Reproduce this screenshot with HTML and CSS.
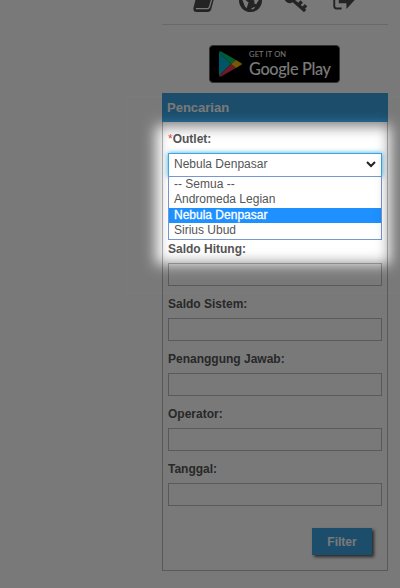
FILE: index.html
```
<!DOCTYPE html>
<html lang="id">
<head>
	<meta charset="UTF-8">
	<meta name="viewport" content="width=device-width, initial-scale=1.0">
	<title>Pencarian</title>
	<link rel="stylesheet" href="styles.css">
</head>
<body>

<div class="sidebar">
	<div class="icons">
		<svg class="icon" viewBox="0 0 24 24">
			<path d="M7 0h16q1.500 0 1 2l-5 19q-.7 3-3 3H3.500Q0 24 .5 19.500L5 2q.7-2 2-2z"/>
			<path class="cut" d="M3 20.500h12q1.700 0 2.300-2L21.500 4"/>
		</svg>
		<svg class="icon" viewBox="0 0 24 24">
			<circle cx="12" cy="12" r="12"/>
			<path class="land" d="M3 10l3 1 4 3-1 3-1 3-2-2-1-3zM14 5l5 1 2 5-2 3-1 2-2-1v-3l-3-1zM12 21l3-2 2 0-2 2z"/>
		</svg>
		<svg class="icon" viewBox="0 0 24 24">
			<path class="key" d="M8 11.500L21 23M14 16.500l3.500-3.500M18.500 20.500L22 17"/>
			<circle class="key" cx="5" cy="9" r="4"/>
		</svg>
		<svg class="icon icon-out" viewBox="0 0 24 24">
			<path class="exit" d="M9 22.500H4q-2.700 0-2.700-2.700V3H7"/>
			<path d="M6 5h8V-2l11 13-11 12v-6H6z"/>
		</svg>
	</div>

	<div class="store">
		<div class="badge">
			<svg class="play" viewBox="0 0 23 26">
				<path fill="#00b4d4" d="M0 1v24l12-12z"/>
				<path fill="#00c46a" d="M0 1q1-1.500 3 0l14 8-5 4z"/>
				<path fill="#e8354f" d="M0 25q1 1.500 3 0l14-8-5-4z"/>
				<path fill="#f5bd00" d="M17 9l5 3q1.500 1 0 2l-5 3-5-4z"/>
			</svg>
			<div class="badge-text">
				<div class="get">GET IT ON</div>
				<div class="google">Google Play</div>
			</div>
		</div>
	</div>

	<div class="panel">
		<div class="panel-head">Pencarian</div>
		<form class="panel-body">
			<div class="label label-outlet"><span class="req">*</span>Outlet:</div>
			<div class="select">
				<span>Nebula Denpasar</span>
				<svg class="arrow" viewBox="0 0 10 7"><path d="M1 1l4 4 4-4"/></svg>
			</div>
			<ul class="options">
				<li>-- Semua --</li>
				<li>Andromeda Legian</li>
				<li class="selected">Nebula Denpasar</li>
				<li class="last">Sirius Ubud</li>
			</ul>

			<div class="label label-first">Saldo Hitung:</div>
			<input class="field" type="text">
			<div class="label">Saldo Sistem:</div>
			<input class="field" type="text">
			<div class="label">Penanggung Jawab:</div>
			<input class="field" type="text">
			<div class="label">Operator:</div>
			<input class="field" type="text">
			<div class="label">Tanggal:</div>
			<input class="field" type="text">

			<button class="filter" type="button">Filter</button>
		</form>
	</div>
</div>

<div class="overlay">
	<div class="spotlight"></div>
</div>

</body>
</html>
```
FILE: styles.css
```
*{
	margin: 0;
	padding: 0;
	box-sizing: border-box;
}

body{
	position: relative;
	height: 588px;
	overflow: hidden;
	background: #fff;
	color: #555;
	font-family: "Liberation Sans", Arial, sans-serif;
	font-size: 12px;
}

.sidebar{
	width: 226px;
	margin-left: 162px;
}

/* top menu, scrolled partly out of view */
.icons{
	display: flex;
	align-items: flex-end;
	gap: 23px;
	height: 25px;
	padding: 0 0 12px 31px;
	border-bottom: 1px solid #ddd;
}

.icon{
	flex: none;
	width: 23px;
	height: 23px;
	fill: #4d4d4d;
	overflow: visible;
}

.icon-out{
	margin: 0 0 2px 2px;
}

.cut{
	fill: none;
	stroke: #fff;
	stroke-width: 1.3;
}

.land{
	fill: #fff;
}

.key,
.exit{
	fill: none;
	stroke: #4d4d4d;
	stroke-width: 3.5;
}

.exit{
	stroke-width: 2;
}

.store{
	height: 68px;
	padding: 20px 0 0 47px;
}

.badge{
	display: flex;
	width: 131px;
	height: 38px;
	padding: 5px 0 0 9px;
	border: 1px solid #666;
	border-radius: 4px;
	background: #000;
	color: #fff;
}

.play{
	width: 23px;
	height: 26px;
}

.badge-text{
	margin-left: 7px;
	white-space: nowrap;
}

.get{
	font: 7.5px/8px Lato, sans-serif;
	letter-spacing: .15px;
}

.google{
	font: 500 16.3px/19px Lato, sans-serif;
	letter-spacing: -.35px;
}

.panel{
	height: 478px;
	border: 1px solid #bbb;
	border-top: 0;
}

.panel-head{
	height: 29px;
	margin: 0 -1px;
	padding-left: 5px;
	background: #3ba2e1;
	color: #fff;
	font-size: 13px;
	font-weight: bold;
	line-height: 29px;
}

.panel-body{
	padding: 1px 5px 0;
}

.label{
	height: 32px;
	padding-top: 11px;
	font-weight: bold;
	line-height: 15px;
}

.label-outlet{
	padding-top: 9px;
}

.label-first{
	height: 23px;
	padding-top: 2px;
}

.req{
	color: #e04b5a;
	font-weight: normal;
}

.select{
	display: flex;
	align-items: center;
	justify-content: space-between;
	height: 24px;
	margin-top: -2px;
	padding: 0 5px 2px;
	border: 1px solid #3da9e0;
	box-shadow: 0 0 5px #3da9e0;
}

.arrow{
	width: 10px;
	height: 7px;
	fill: none;
	stroke: #222;
	stroke-width: 2;
}

.options{
	position: relative;
	height: 64px;
	margin-top: -1px;
	padding-top: 1px;
	border: 1px solid #7897cf;
	background: #fff;
	list-style: none;
}

.options li{
	height: 15px;
	padding-left: 5px;
	line-height: 13px;
}

.options .selected,
.options .last{
	line-height: 14px;
}

.options .selected{
	background: #1e90ff;
	color: #fff;
	-webkit-text-stroke: .3px #fff;
}

.field{
	display: block;
	width: 100%;
	height: 23px;
	border: 1px solid #bbb;
	background: none;
}

.filter{
	display: block;
	width: 60px;
	height: 27px;
	margin: 22px 10px 0 auto;
	border: 0;
	background: #3ba2e1;
	box-shadow: 2px 2px 3px #555;
	color: #fff;
	font: bold 12px "Liberation Sans", Arial, sans-serif;
}

.overlay{
	position: absolute;
	inset: 0;
	overflow: hidden;
}

/* dims the page and leaves a soft hole around the open outlet list */
.spotlight{
	width: 294px;
	height: 198px;
	margin: 96px 0 0 126px;
	box-shadow: inset 0 0 14px 30px rgba(0, 0, 0, .525), 0 0 0 600px rgba(0, 0, 0, .525);
}
```
